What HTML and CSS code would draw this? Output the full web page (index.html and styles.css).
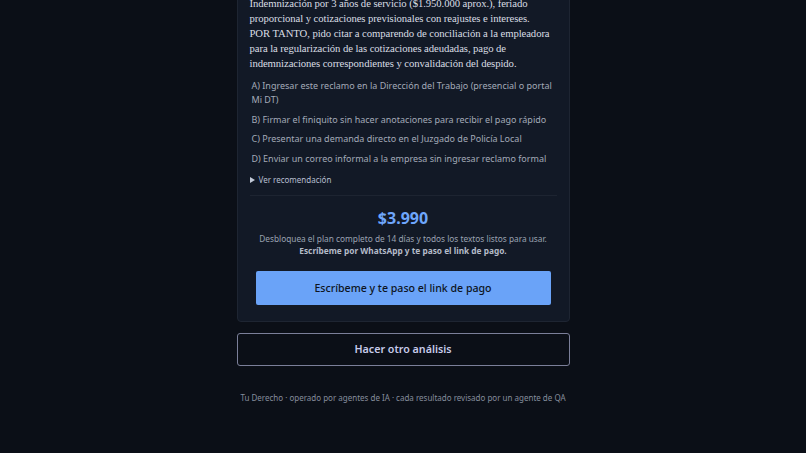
FILE: index.html
```html
<!DOCTYPE html>
<html lang="es">
<head>
<meta charset="utf-8">
<title>Tu Derecho</title>
<link rel="stylesheet" href="styles.css">
</head>
<body>
<main class="wrap">
  <section class="card">
    <p class="letter">Indemnización por 3 años de servicio ($1.950.000 aprox.), feriado proporcional y cotizaciones previsionales con reajustes e intereses.<br>POR TANTO, pido citar a comparendo de conciliación a la empleadora para la regularización de las cotizaciones adeudadas, pago de indemnizaciones correspondientes y convalidación del despido.</p>
    <ul class="options">
      <li>A) Ingresar este reclamo en la Dirección del Trabajo (presencial o portal Mi DT)</li>
      <li>B) Firmar el finiquito sin hacer anotaciones para recibir el pago rápido</li>
      <li>C) Presentar una demanda directo en el Juzgado de Policía Local</li>
      <li>D) Enviar un correo informal a la empresa sin ingresar reclamo formal</li>
    </ul>
    <details class="reco">
      <summary>Ver recomendación</summary>
    </details>
    <div class="upsell">
      <div class="price">$3.990</div>
      <p class="desc">Desbloquea el plan completo de 14 días y todos los textos listos para usar.<br><strong>Escríbeme por WhatsApp y te paso el link de pago.</strong></p>
      <a class="btn-primary" href="#">Escríbeme y te paso el link de pago</a>
    </div>
  </section>
  <a class="btn-outline" href="#">Hacer otro análisis</a>
  <footer class="foot">Tu Derecho · operado por agentes de IA · cada resultado revisado por un agente de QA</footer>
</main>
</body>
</html>
```

FILE: styles.css
```css
* { box-sizing: border-box; }
html, body { margin: 0; padding: 0; }
body {
  background: #0b0f17;
  color: #d6dae2;
  font-family: "Noto Sans", "Open Sans", sans-serif;
  height: 453px;
  overflow: hidden;
}
.wrap {
  width: 333px;
  margin: -17px auto 0;
  display: flex;
  flex-direction: column;
}
.card {
  background: #121926;
  border: 1px solid #1e2532;
  border-radius: 4px;
  padding: 12px 12px 16px;
}
.letter {
  margin: 0 -3px 0 0;
  font-family: "Liberation Serif", serif;
  font-size: 10.7px;
  letter-spacing: -0.08px;
  line-height: 15px;
  color: #d9dde4;
}
.options {
  list-style: none;
  margin: 8px 0 0;
  padding: 0 2px;
  display: flex;
  flex-direction: column;
  gap: 5.5px;
}
.options li {
  font-size: 9px;
  line-height: 14px;
  color: #a3aab8;
}
.reco { margin-top: 8px; }
.reco summary {
  font-size: 8px;
  line-height: 12px;
  color: #b7bfd0;
  cursor: pointer;
  list-style: none;
  display: flex;
  align-items: center;
  gap: 4px;
}
.reco summary::before {
  content: "";
  width: 0; height: 0;
  border-left: 5px solid #c3cad8;
  border-top: 3px solid transparent;
  border-bottom: 3px solid transparent;
}
.upsell {
  margin-top: 9px;
  border-top: 1px solid #1d2431;
  padding: 12px 6px 0;
  text-align: center;
}
.price {
  font-size: 16px;
  line-height: 20px;
  font-weight: 700;
  color: #6ea6fb;
}
.desc {
  margin: 5px 0 0;
  font-size: 8.3px;
  line-height: 12.5px;
  color: #9aa2b1;
}
.desc strong { color: #b4bbc8; font-weight: 700; }
.btn-primary {
  display: flex;
  align-items: center;
  justify-content: center;
  height: 34px;
  margin-top: 13px;
  background: #6aa3f8;
  color: #0d1422;
  font-size: 10.6px;
  font-weight: 500;
  text-decoration: none;
  border-radius: 2px;
}
.btn-outline {
  display: flex;
  align-items: center;
  justify-content: center;
  height: 33px;
  margin-top: 11px;
  border: 1px solid #7b7f99;
  border-radius: 3px;
  color: #c7cbea;
  font-size: 10.7px;
  font-weight: 600;
  text-decoration: none;
}
.foot {
  margin-top: 26px;
  text-align: center;
  font-size: 8px;
  line-height: 12px;
  white-space: nowrap;
  color: #858d9c;
}
```
